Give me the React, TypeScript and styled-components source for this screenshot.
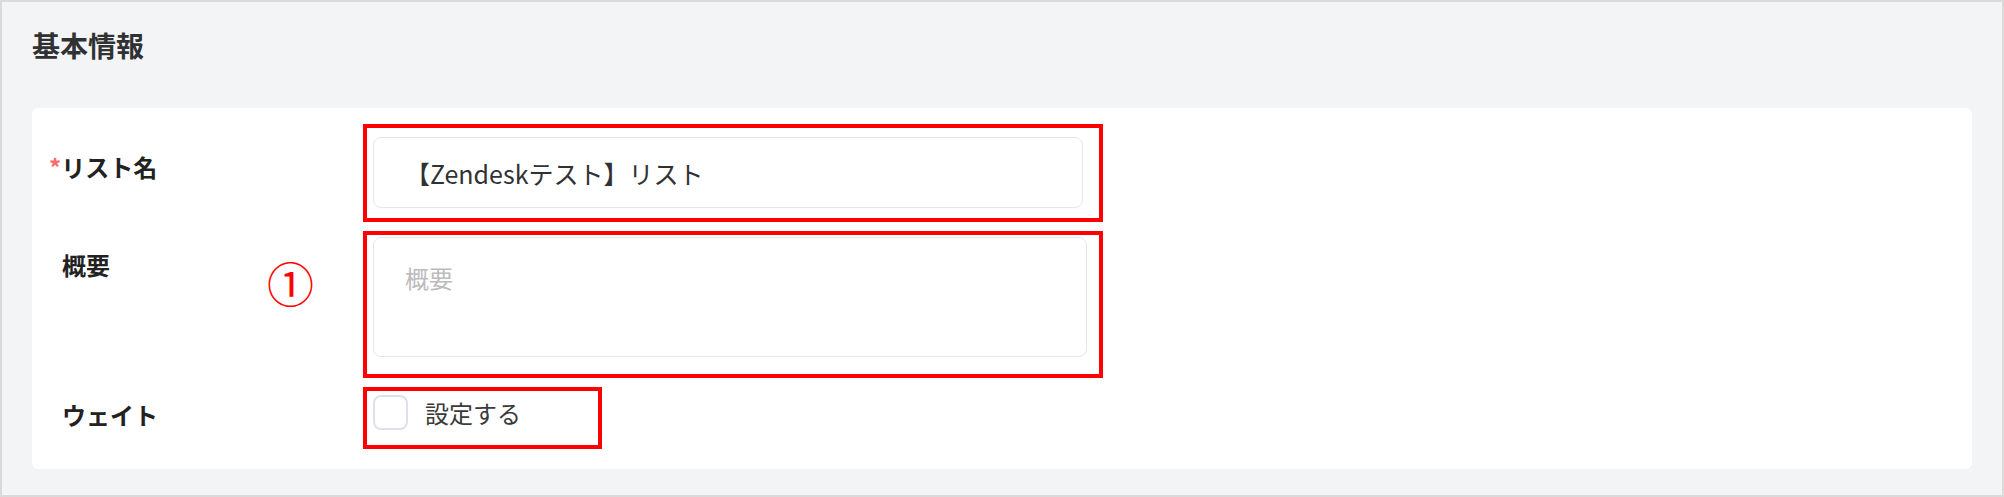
import { createGlobalStyle } from "styled-components";
import styled from "styled-components";

const GlobalStyle = createGlobalStyle`
  html, body {
    margin: 0;
    padding: 0;
    background: #ffffff;
  }
  body {
    font-family: "Noto Sans CJK JP", "Noto Sans", sans-serif;
  }
`;

const FONT = `"Noto Sans CJK JP", "Noto Sans", sans-serif`;

const Frame = styled.div`
  box-sizing: border-box;
  width: 2004px;
  height: 497px;
  border: 2px solid #dadada;
  background: #f3f4f6;
  font-family: ${FONT};
`;

const SectionTitle = styled.h2`
  margin: 0;
  padding: 23px 0 0 30px;
  height: 40px;
  margin-bottom: 43px;
  color: #303133;
  font-size: 28px;
  line-height: 40px;
  font-weight: 700;
`;

const Card = styled.section`
  margin: 0 30px;
  padding: 16px 30px 20px;
  background: #ffffff;
  border-radius: 6px;
  display: flex;
  flex-direction: column;
  gap: 9px;
`;

const FormRow = styled.div`
  display: grid;
  grid-template-columns: 301px auto;
  align-items: start;
`;

const LabelCell = styled.div<{ $top: number }>`
  position: relative;
  padding-top: ${(p) => p.$top}px;
  color: #222222;
  font-size: 24px;
  line-height: 36px;
  font-weight: 700;
`;

const Required = styled.span`
  margin-left: -13px;
  color: #f56c6c;
  font-weight: 700;
`;

// red callout number drawn over the form
const Annotation = styled.span`
  position: absolute;
  left: 205px;
  top: 27px;
  color: #ff0000;
  font-size: 47px;
  line-height: 47px;
  font-weight: 400;
`;

const Highlight = styled.div<{ $w: number; $h: number; $pad: string }>`
  box-sizing: border-box;
  width: ${(p) => p.$w}px;
  height: ${(p) => p.$h}px;
  padding: ${(p) => p.$pad};
  border: 4px solid #ff0000;
`;

const TextInput = styled.input`
  box-sizing: border-box;
  display: block;
  width: 100%;
  height: 71px;
  margin: 0;
  padding: 0 31px;
  border: 1px solid #e4e7ed;
  border-radius: 8px;
  background: #ffffff;
  color: #303133;
  font-family: ${FONT};
  font-size: 25px;
  outline: none;
`;

const TextArea = styled.textarea`
  box-sizing: border-box;
  display: block;
  width: 100%;
  height: 120px;
  margin: 0;
  padding: 22px 31px;
  border: 1px solid #e4e7ed;
  border-radius: 8px;
  background: #ffffff;
  color: #303133;
  font-family: ${FONT};
  font-size: 24px;
  line-height: 36px;
  resize: none;
  outline: none;

  &::placeholder {
    color: #bcbcbc;
  }
`;

const CheckRow = styled.label`
  display: flex;
  align-items: center;
  gap: 17px;
  color: #3a3a3a;
  font-size: 24px;
  line-height: 34px;
`;

const CheckBox = styled.span`
  box-sizing: border-box;
  width: 35px;
  height: 35px;
  border: 2px solid #dde2ea;
  border-radius: 8px;
  background: #ffffff;
`;

export default function App() {
  return (
    <>
      <GlobalStyle />
      <Frame>
        <SectionTitle>基本情報</SectionTitle>
        <Card>
          <FormRow>
            <LabelCell $top={25}>
              <Required>*</Required>リスト名
            </LabelCell>
            <Highlight $w={740} $h={98} $pad="9px 16px 10px 6px">
              <TextInput readOnly value="【Zendeskテスト】リスト" />
            </Highlight>
          </FormRow>
          <FormRow>
            <LabelCell $top={16}>
              概要
              <Annotation>①</Annotation>
            </LabelCell>
            <Highlight $w={740} $h={147} $pad="2px 12px 17px 6px">
              <TextArea readOnly placeholder="概要" />
            </Highlight>
          </FormRow>
          <FormRow>
            <LabelCell $top={10}>ウェイト</LabelCell>
            <Highlight $w={239} $h={62} $pad="4px 0 0 6px">
              <CheckRow>
                <CheckBox />
                設定する
              </CheckRow>
            </Highlight>
          </FormRow>
        </Card>
      </Frame>
    </>
  );
}
